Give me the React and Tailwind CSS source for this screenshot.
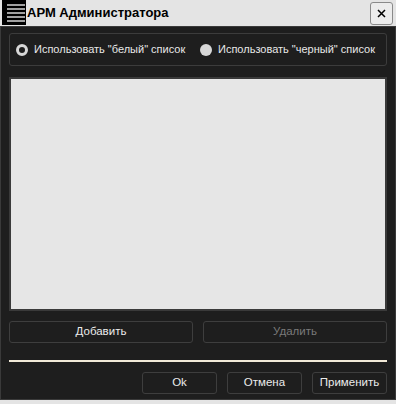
import React, { useState } from 'react'

function Radio({ checked, label, onClick }) {
  return (
    <button type="button" onClick={onClick} className="flex items-center gap-[6px] whitespace-nowrap text-left">
      {checked ? (
        <span className="h-[12px] w-[12px] shrink-0 rounded-full border-[3px] border-[#d8d8d8] bg-[#1e1e1e]" />
      ) : (
        <span className="h-[12px] w-[12px] shrink-0 rounded-full bg-[#d8d8d8]" />
      )}
      <span className="text-[11px] text-[#e8e8e8]">{label}</span>
    </button>
  )
}

function DarkButton({ children, disabled, className = '' }) {
  return (
    <button
      type="button"
      disabled={disabled}
      className={`h-[22px] rounded-[3px] border border-[#3e3e3e] bg-[#1e1e1e] text-[11.5px] ${disabled ? 'text-[#7a7a7a]' : 'text-[#ececec]'} ${className}`}
    >
      {children}
    </button>
  )
}

export default function App() {
  const [mode, setMode] = useState('white')

  return (
    <div className="flex h-[404px] w-[396px] flex-col bg-[#e4e4e4]" style={{ fontFamily: '"Liberation Sans", Arial, sans-serif' }}>
      {/* title bar */}
      <div className="flex h-[26px] items-center">
        <div className="ml-[2px] flex h-[25px] w-[24px] flex-col justify-center gap-[2px] self-start bg-black pl-[5px] pr-[1px]">
          {[0, 1, 2, 3, 4].map((i) => (
            <span key={i} className="h-[2px] w-full bg-[#a0a0a0]" />
          ))}
        </div>
        <div className="ml-[1px] text-[13px] font-bold text-black">АРМ Администратора</div>
        <div className="flex-1" />
        <button
          type="button"
          className="mr-[3px] mt-[1px] flex h-[23px] w-[23px] items-center justify-center rounded-[3px] border border-[#8a8a8a] bg-[#ececec]"
        >
          <svg width="9" height="9" viewBox="0 0 9 9">
            <path d="M1 1L8 8M8 1L1 8" stroke="#000" strokeWidth="1.5" />
          </svg>
        </button>
      </div>

      {/* body */}
      <div className="flex h-[374px] flex-col border border-[#3a3a3a] bg-[#1e1e1e] px-[8px] pt-[6px]">
        <div className="flex h-[33px] items-center rounded-[3px] border border-[#3c3c3c] pl-[6px]">
          <div className="w-[184px]">
            <Radio checked={mode === 'white'} label='Использовать "белый" список' onClick={() => setMode('white')} />
          </div>
          <Radio checked={mode === 'black'} label='Использовать "черный" список' onClick={() => setMode('black')} />
        </div>

        <div className="mt-[11px] h-[234px] border-2 border-[#3a3a3a] bg-[#e6e6e6]" />

        <div className="mt-[10px] flex gap-[10px]">
          <DarkButton className="flex-1">Добавить</DarkButton>
          <DarkButton className="flex-1" disabled>Удалить</DarkButton>
        </div>

        <div className="mt-[17px] h-[2px] bg-[#f2ead8]" />

        <div className="mt-[10px] flex justify-end gap-[10px]">
          <DarkButton className="w-[75px]">Ok</DarkButton>
          <DarkButton className="w-[75px]">Отмена</DarkButton>
          <DarkButton className="w-[75px]">Применить</DarkButton>
        </div>
      </div>
    </div>
  )
}
